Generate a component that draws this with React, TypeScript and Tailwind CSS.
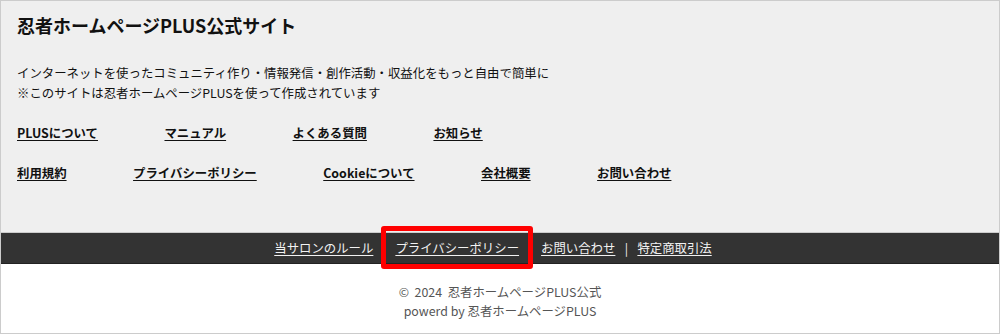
const font = { fontFamily: '"Noto Sans CJK JP", "Noto Sans", sans-serif' };

const rowOne = ['PLUSについて', 'マニュアル', 'よくある質問', 'お知らせ'];
const rowTwo = ['利用規約', 'プライバシーポリシー', 'Cookieについて', '会社概要', 'お問い合わせ'];

function LinkRow({ items }: { items: string[] }) {
  return (
    <div className="flex gap-[66.5px] text-[12.4px] font-bold leading-[20px] text-[#111]">
      {items.map((t) => (
        <a key={t} href="#" className="underline underline-offset-2">
          {t}
        </a>
      ))}
    </div>
  );
}

function Sep() {
  return <span className="w-[22px] text-center">|</span>;
}

export default function App() {
  return (
    <div className="h-[334px] w-[1000px] overflow-hidden border border-[#ccc] bg-white" style={font}>
      <div className="flex h-[231px] flex-col bg-[#efefef] px-[16px] pt-[11px]">
        <h1 className="text-[18px] font-bold leading-[27px] text-[#111]">忍者ホームページPLUS公式サイト</h1>
        <p className="mt-[24px] text-[12.4px] leading-[20px] text-[#111]">
          インターネットを使ったコミュニティ作り・情報発信・創作活動・収益化をもっと自由で簡単に
          <br />
          ※このサイトは忍者ホームページPLUSを使って作成されています
        </p>
        <div className="mt-[20px]">
          <LinkRow items={rowOne} />
        </div>
        <div className="mt-[20px]">
          <LinkRow items={rowTwo} />
        </div>
      </div>

      <div className="flex h-[32px] items-center justify-center border-t border-b border-t-[#ccc] border-b-[#222] bg-[#333] pr-[14px] text-[12.4px] leading-[20px] text-[#f2f2f2]">
        <a href="#" className="underline underline-offset-2">当サロンのルール</a>
        <Sep />
        <span className="relative">
          <a href="#" className="underline underline-offset-2">プライバシーポリシー</a>
          <span className="pointer-events-none absolute top-[-12px] right-[-14px] bottom-[-11px] left-[-14px] z-10 rounded-[3px] border-[5px] border-[#f00]" />
        </span>
        <Sep />
        <a href="#" className="underline underline-offset-2">お問い合わせ</a>
        <Sep />
        <a href="#" className="underline underline-offset-2">特定商取引法</a>
      </div>

      <div className="flex flex-col items-center pt-[19px] text-[12.4px] leading-[19px] text-[#555]">
        <p>©&nbsp;&nbsp;2024&nbsp;&nbsp;忍者ホームページPLUS公式</p>
        <p>powerd by 忍者ホームページPLUS</p>
      </div>
    </div>
  );
}
